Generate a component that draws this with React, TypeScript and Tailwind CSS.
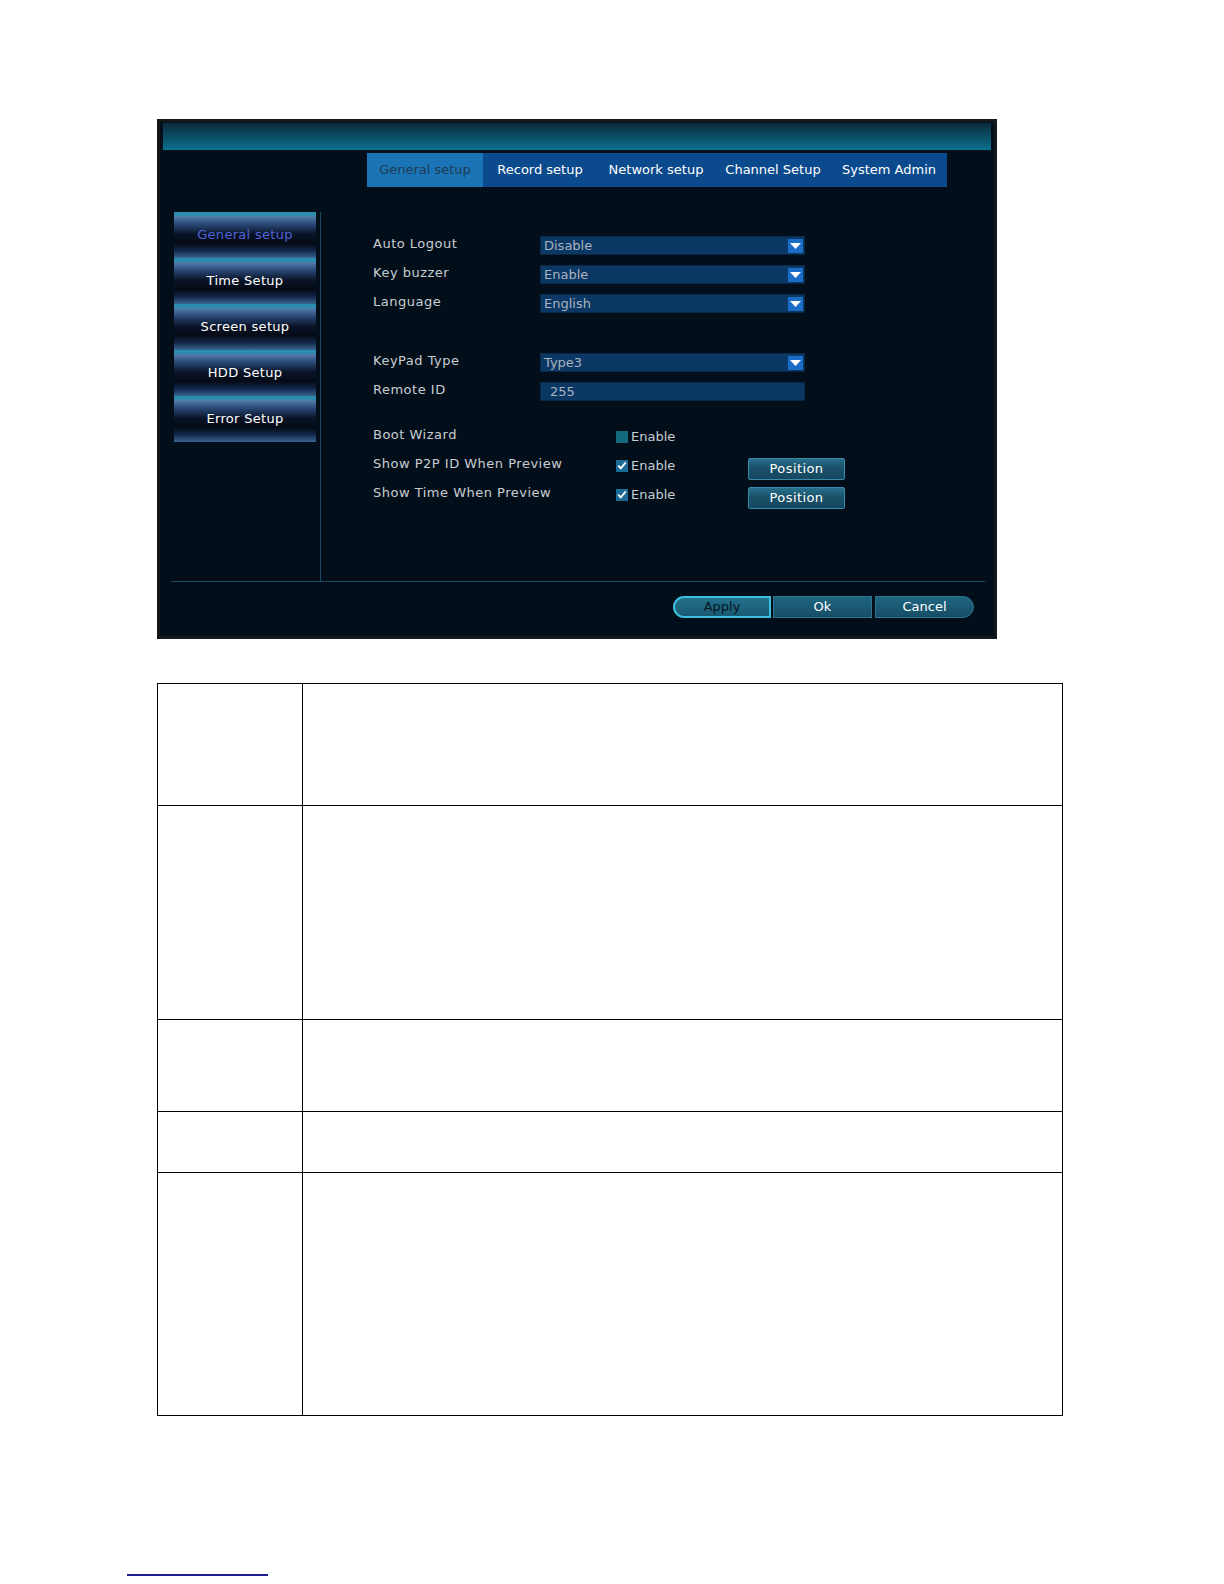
import React from "react";

function Arrow() {
  return (
    <span className="flex h-[14px] w-[15px] items-center justify-center bg-[#1b6cc4]">
      <svg width="11" height="6" viewBox="0 0 11 6">
        <path d="M0 0h11L5.5 6z" fill="#fff" />
      </svg>
    </span>
  );
}

function Select({ value }: { value: string }) {
  return (
    <div className="flex h-[19px] w-[265px] items-center justify-between border border-[#072846] bg-[#0a3764] pl-[3px] pr-[1px] text-[13px] text-[#a9b3bd]">
      <span className="leading-none">{value}</span>
      <Arrow />
    </div>
  );
}

function Check({ checked }: { checked?: boolean }) {
  return (
    <span
      className={
        checked
          ? "flex h-[12px] w-[12px] items-center justify-center bg-[#1a6b96]"
          : "flex h-[12px] w-[12px] items-center justify-center bg-[#13687c]"
      }
    >
      {checked && (
        <svg width="10" height="9" viewBox="0 0 10 9">
          <path d="M1.2 4.6l2.6 2.8L8.8 1.4" stroke="#fff" strokeWidth="1.8" fill="none" />
        </svg>
      )}
    </span>
  );
}

function Label({ children, w }: { children: React.ReactNode; w: string }) {
  return (
    <div className={`${w} pb-[3px] text-[13px] tracking-[0.5px] text-[#c9cdd1]`}>{children}</div>
  );
}

function PositionBtn() {
  return (
    <div className="mt-[6px] flex h-[22px] w-[97px] items-center justify-center rounded-[2px] border border-[#3a8bab] bg-[linear-gradient(to_bottom,#27708c,#1a5068_45%,#154860)] text-[13px] tracking-[0.4px] text-white">
      Position
    </div>
  );
}

const sideItem =
  "flex h-[46px] items-center justify-center text-[13px] tracking-[0.3px] bg-[linear-gradient(to_bottom,#2a8db0_0%,#2a8db0_6%,#5078a8_11%,#2a4a78_26%,#0a1428_48%,#050a16_68%,#12264a_84%,#3a6590_100%)]";

export default function App() {
  return (
    <div className="min-h-[1584px] w-full bg-white font-['DejaVu_Sans',sans-serif]">
      <div className="pl-[157px] pt-[119px]">
        <div className="flex h-[520px] w-[840px] flex-col border-[3px] border-[#15181b] bg-[#020f1b]">
          {/* header bar */}
          <div className="mx-[3px] mt-[1px] h-[28px] border-b border-[#06121c] bg-[linear-gradient(to_bottom,#0a2a3a,#0b5a75_70%,#0a7390)]" />

          {/* tabs */}
          <div className="ml-[207px] mt-[2px] flex h-[34px] w-[580px] text-[13px] text-white">
            <div className="flex w-[116px] items-center justify-center bg-[#1b74b6] text-[#1f3b55]">General setup</div>
            <div className="flex w-[114px] items-center justify-center bg-[#0b4a8d]">Record setup</div>
            <div className="flex w-[118px] items-center justify-center bg-[#0b4a8d]">Network setup</div>
            <div className="flex w-[116px] items-center justify-center bg-[#0b4a8d]">Channel Setup</div>
            <div className="flex w-[116px] items-center justify-center bg-[#0b4a8d]">System Admin</div>
          </div>

          {/* middle */}
          <div className="mt-[25px] flex h-[369px]">
            <div className="ml-[14px] flex w-[142px] flex-col self-start">
              <div className={`${sideItem} text-[#4f63d6]`}>General setup</div>
              <div className={`${sideItem} text-white`}>Time Setup</div>
              <div className={`${sideItem} text-white`}>Screen setup</div>
              <div className={`${sideItem} text-white`}>HDD Setup</div>
              <div className={`${sideItem} text-white`}>Error Setup</div>
            </div>
            <div className="ml-[4px] w-px bg-[#1b4a64]" />
            <div className="flex flex-col pl-[52px] pt-[19px]">
              <div className="flex h-[29px] items-center">
                <Label w="w-[167px]">Auto Logout</Label>
                <Select value="Disable" />
              </div>
              <div className="flex h-[29px] items-center">
                <Label w="w-[167px]">Key buzzer</Label>
                <Select value="Enable" />
              </div>
              <div className="flex h-[29px] items-center">
                <Label w="w-[167px]">Language</Label>
                <Select value="English" />
              </div>
              <div className="mt-[30px] flex h-[29px] items-center">
                <Label w="w-[167px]">KeyPad Type</Label>
                <Select value="Type3" />
              </div>
              <div className="flex h-[29px] items-center">
                <Label w="w-[167px]">Remote ID</Label>
                <div className="flex h-[19px] w-[265px] items-center border border-[#072846] bg-[#0a3764] pl-[9px] text-[13px] text-[#a9b3bd]">
                  255
                </div>
              </div>
              <div className="mt-[16px] flex h-[29px] items-center">
                <Label w="w-[243px]">Boot Wizard</Label>
                <div className="flex w-[132px] items-center gap-[3px] text-[13px] text-[#c9cdd1]">
                  <Check />
                  <span>Enable</span>
                </div>
              </div>
              <div className="flex h-[29px] items-center">
                <Label w="w-[243px]">Show P2P ID When Preview</Label>
                <div className="flex w-[132px] items-center gap-[3px] text-[13px] text-[#c9cdd1]">
                  <Check checked />
                  <span>Enable</span>
                </div>
                <PositionBtn />
              </div>
              <div className="flex h-[29px] items-center">
                <Label w="w-[243px]">Show Time When Preview</Label>
                <div className="flex w-[132px] items-center gap-[3px] text-[13px] text-[#c9cdd1]">
                  <Check checked />
                  <span>Enable</span>
                </div>
                <PositionBtn />
              </div>
            </div>
          </div>

          {/* bottom line */}
          <div className="ml-[11px] mr-[9px] h-px bg-[#1b4a64]" />

          {/* buttons */}
          <div className="mt-[14px] flex justify-end gap-[2px] pr-[20px] text-[13px]">
            <div className="flex h-[22px] w-[98px] items-center justify-center rounded-l-full border-2 border-[#3cc0e0] bg-[linear-gradient(to_bottom,#23708c,#1a5a72)] text-[#08141f]">
              Apply
            </div>
            <div className="flex h-[22px] w-[99px] items-center justify-center border border-[#2d7492] bg-[linear-gradient(to_bottom,#1f6580,#164d66)] text-white">
              Ok
            </div>
            <div className="ml-[1px] flex h-[22px] w-[99px] items-center justify-center rounded-r-full border border-[#2d7492] bg-[linear-gradient(to_bottom,#1f6580,#164d66)] text-white">
              Cancel
            </div>
          </div>
        </div>
      </div>

      {/* table */}
      <div className="pl-[157px] pt-[44px]">
        <table className="w-[906px] border-collapse">
          <tbody>
            <tr className="h-[122px]">
              <td className="w-[145px] border-[1.5px] border-black"></td>
              <td className="border-[1.5px] border-black"></td>
            </tr>
            <tr className="h-[214px]">
              <td className="w-[145px] border-[1.5px] border-black"></td>
              <td className="border-[1.5px] border-black"></td>
            </tr>
            <tr className="h-[92px]">
              <td className="w-[145px] border-[1.5px] border-black"></td>
              <td className="border-[1.5px] border-black"></td>
            </tr>
            <tr className="h-[61px]">
              <td className="w-[145px] border-[1.5px] border-black"></td>
              <td className="border-[1.5px] border-black"></td>
            </tr>
            <tr className="h-[243px]">
              <td className="w-[145px] border-[1.5px] border-black"></td>
              <td className="border-[1.5px] border-black"></td>
            </tr>
          </tbody>
        </table>
      </div>

      <div className="ml-[127px] mt-[158px] h-[2px] w-[141px] bg-[#1c1c8c]" />
    </div>
  );
}
